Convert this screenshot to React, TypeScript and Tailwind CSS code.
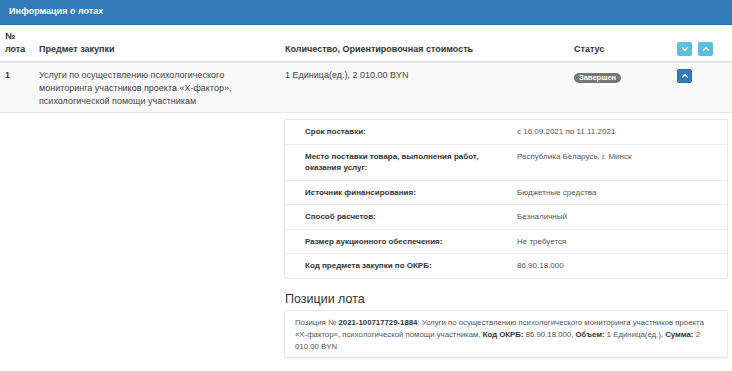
import React from "react";

const font = { fontFamily: '"Liberation Sans", Arial, sans-serif' };

function Chevron({ up }: { up?: boolean }) {
  return (
    <svg width="8" height="8" viewBox="0 0 8 8" fill="none" stroke="white" strokeWidth="1.3" strokeLinecap="round" strokeLinejoin="round">
      {up ? <path d="M1.5 5.2 L4 2.7 L6.5 5.2" /> : <path d="M1.5 2.8 L4 5.3 L6.5 2.8" />}
    </svg>
  );
}

const details: [string, string][] = [
  ["Срок поставки:", "с 16.09.2021 по 11.11.2021"],
  ["Место поставки товара, выполнения работ, оказания услуг:", "Республика Беларусь, г. Минск"],
  ["Источник финансирования:", "Бюджетные средства"],
  ["Способ расчетов:", "Безналичный"],
  ["Размер аукционного обеспечения:", "Не требуется"],
  ["Код предмета закупки по ОКРБ:", "86.90.18.000"],
];

export default function App() {
  return (
    <div className="w-[732px] h-[371px] bg-white overflow-hidden text-[#333]" style={font}>
      <div className="h-[25px] bg-[#337ab7] flex items-center pl-[9px] text-white font-bold text-[9px] border-b border-[#2e6da4]">
        Информация о лотах
      </div>
      <div className="flex border-b-2 border-[#e3e3e3] text-[9px] font-bold leading-[13px]">
        <div className="w-[34px] pl-[5px] pt-[5px] pb-[5px]">
          №<br />лота
        </div>
        <div className="w-[246px] pl-[5px] pt-[5px] pb-[5px] flex items-end">Предмет закупки</div>
        <div className="w-[289px] pl-[5px] pt-[5px] pb-[5px] flex items-end">Количество, Ориентировочная стоимость</div>
        <div className="w-[108px] pl-[5px] pt-[5px] pb-[5px] flex items-end">Статус</div>
        <div className="flex-1 flex items-end gap-[6px] pb-[5px]">
          <div className="w-[15px] h-[14px] bg-[#5bc0de] rounded-[2px] flex items-center justify-center"><Chevron /></div>
          <div className="w-[15px] h-[14px] bg-[#5bc0de] rounded-[2px] flex items-center justify-center"><Chevron up /></div>
        </div>
      </div>
      <div className="flex bg-[#f9f9f9] border-b border-[#e3e3e3] text-[9px] leading-[13px] h-[50px]">
        <div className="w-[34px] pl-[5px] pt-[6px] font-bold">1</div>
        <div className="w-[246px] pl-[5px] pr-[12px] pt-[6px] text-[#444]">
          Услуги по осуществлению психологического мониторинга участников проекта «Х-фактор», психологической помощи участникам
        </div>
        <div className="w-[289px] pl-[5px] pt-[6px] text-[#444]">1 Единица(ед.), 2 010.00 BYN</div>
        <div className="w-[108px] pl-[5px] pt-[8px]">
          <span className="inline-block bg-[#777] text-white font-bold text-[7.5px] leading-[10px] px-[5px] rounded-full">Завершен</span>
        </div>
        <div className="flex-1 pt-[6px]">
          <div className="w-[15px] h-[14px] bg-[#337ab7] border border-[#2e6da4] rounded-[2px] flex items-center justify-center"><Chevron up /></div>
        </div>
      </div>
      <div className="ml-[284px] mr-[4px] mt-[6px] border border-[#e6e6e6] rounded-[2px] text-[8px] leading-[11.5px]">
        {details.map(([k, v], i) => (
          <div key={i} className={"flex py-[6px] " + (i > 0 ? "border-t border-[#ececec]" : "")}>
            <div className="w-[232px] pl-[20px] pr-[10px] font-bold text-[#333]">{k}</div>
            <div className="flex-1 text-[#555]">{v}</div>
          </div>
        ))}
      </div>
      <div className="ml-[285px] mt-[12px] text-[12.5px] leading-[16px] text-[#333]">Позиции лота</div>
      <div className="ml-[284px] mr-[4px] mt-[3px] border border-[#e6e6e6] rounded-[3px] shadow-[0_1px_1px_rgba(0,0,0,0.05)] pl-[10px] pr-[20px] pt-[6px] pb-[4px] text-[7.8px] leading-[12px] text-[#555]">
        Позиция № <b className="text-[#333]">2021-100717729-1884</b>: Услуги по осуществлению психологического мониторинга участников проекта «Х-фактор», психологической помощи участникам, <b className="text-[#333]">Код ОКРБ:</b> 86.90.18.000, <b className="text-[#333]">Объем:</b> 1 Единица(ед.), <b className="text-[#333]">Сумма:</b> 2 010.00 BYN
      </div>
    </div>
  );
}
